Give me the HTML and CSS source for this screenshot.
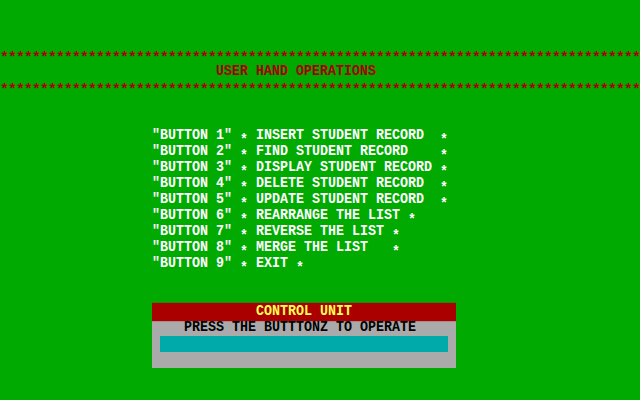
FILE: index.html
```html
<!DOCTYPE html>
<html>
<head>
<meta charset="utf-8">
<link rel="stylesheet" href="styles.css">
</head>
<body>
<div class="screen">
  <div class="row"></div>
  <div class="row"></div>
  <div class="row"></div>
  <div class="row stars"><span class="s">********************************************************************************</span></div>
  <div class="row title">USER HAND OPERATIONS</div>
  <div class="row stars"><span class="s">********************************************************************************</span></div>
  <div class="row"></div>
  <div class="row"></div>
  <div class="row menu">"BUTTON 1" <span class="a">*</span> INSERT STUDENT RECORD  <span class="a">*</span></div>
  <div class="row menu">"BUTTON 2" <span class="a">*</span> FIND STUDENT RECORD    <span class="a">*</span></div>
  <div class="row menu">"BUTTON 3" <span class="a">*</span> DISPLAY STUDENT RECORD <span class="a">*</span></div>
  <div class="row menu">"BUTTON 4" <span class="a">*</span> DELETE STUDENT RECORD  <span class="a">*</span></div>
  <div class="row menu">"BUTTON 5" <span class="a">*</span> UPDATE STUDENT RECORD  <span class="a">*</span></div>
  <div class="row menu">"BUTTON 6" <span class="a">*</span> REARRANGE THE LIST <span class="a">*</span></div>
  <div class="row menu">"BUTTON 7" <span class="a">*</span> REVERSE THE LIST <span class="a">*</span></div>
  <div class="row menu">"BUTTON 8" <span class="a">*</span> MERGE THE LIST   <span class="a">*</span></div>
  <div class="row menu">"BUTTON 9" <span class="a">*</span> EXIT <span class="a">*</span></div>
  <div class="row"></div>
  <div class="row"></div>
  <div class="panel">
    <div class="row panel-head">CONTROL UNIT</div>
    <div class="row panel-msg">PRESS THE BUTTTONZ TO OPERATE</div>
    <div class="row panel-input"><div class="input-bar"></div></div>
    <div class="row"></div>
  </div>
</div>
</body>
</html>
```
FILE: styles.css
```css
html, body {
  margin: 0;
  padding: 0;
  background: #00aa00;
}
.screen {
  width: 640px;
  height: 400px;
  display: flex;
  flex-direction: column;
  font-family: "Liberation Mono", "DejaVu Sans Mono", monospace;
  font-weight: bold;
  font-size: 13.333px;
  line-height: 16px;
  overflow: hidden;
}
.row {
  height: 16px;
  white-space: pre;
  flex: none;
}
.title, .menu, .panel-head, .panel-msg {
  transform: scaleY(1.15);
}
.a {
  vertical-align: -4px;
  line-height: 8px;
}
.s {
  font-size: 15px;
  letter-spacing: -1px;
  vertical-align: -3px;
  line-height: 8px;
}
.stars {
  color: #aa0000;
}
.title {
  color: #aa0000;
  padding-left: 216px;
}
.menu {
  color: #ffffff;
  padding-left: 152px;
}
.panel {
  margin-left: 152px;
  width: 304px;
  background: #aaaaaa;
  display: flex;
  flex-direction: column;
}
.panel-head {
  background: #aa0000;
  color: #ffff55;
  padding-left: 104px;
}
.panel-msg {
  color: #000000;
  padding-left: 32px;
}
.panel-input {
  padding: 0 8px;
}
.input-bar {
  height: 16px;
  background: #00aaaa;
}
```
